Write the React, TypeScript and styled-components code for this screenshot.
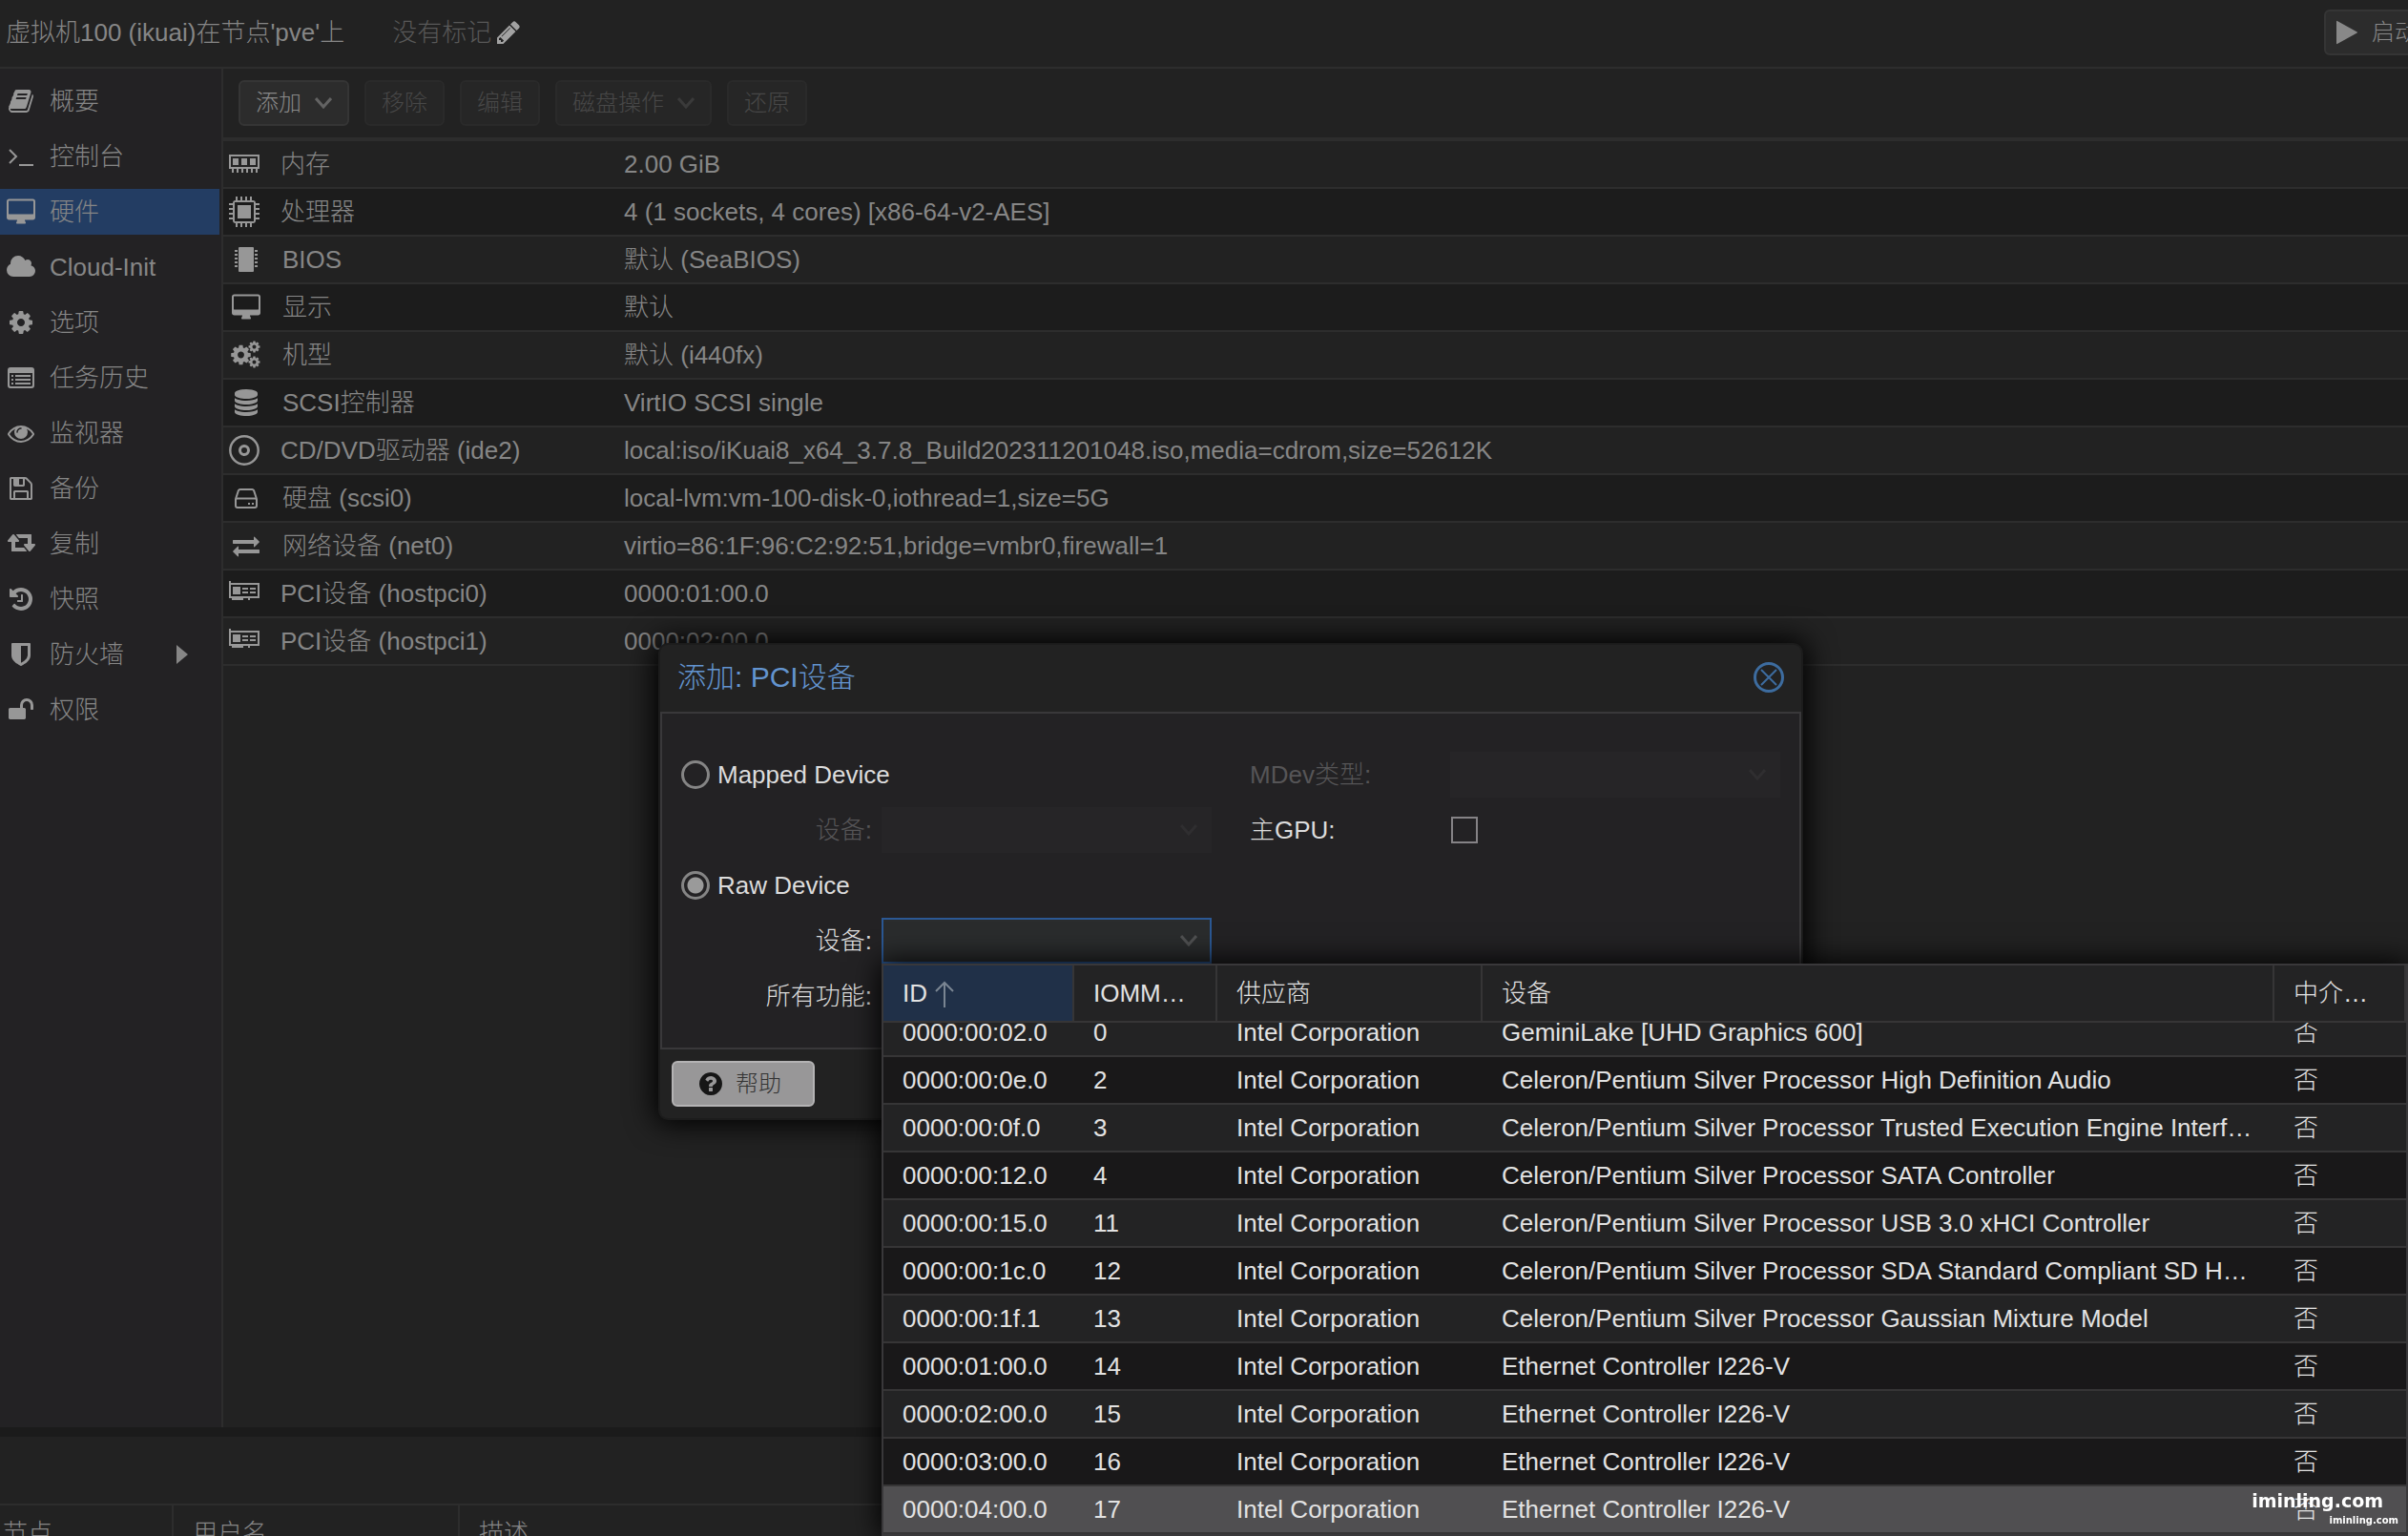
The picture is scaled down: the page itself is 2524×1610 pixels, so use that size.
import React, { useEffect, useRef } from "react";
import styled, { createGlobalStyle, css } from "styled-components";

const color = {
  bg: "#222222",
  sidebar: "#232224",
  altRow: "#1c1c1c",
  line: "#2d2d2d",
  text: "#868686",
  icon: "#979797",
  active: "#233d63",
  dialogLine: "#39383a",
  bright: "#dcdcdc",
};

const GlobalStyle = createGlobalStyle`
  *, *::before, *::after { box-sizing: border-box; }
  html, body { margin: 0; background: ${color.bg}; }
  body, button, input, select, table {
    font-family: "Liberation Sans", "Noto Sans CJK SC", sans-serif;
    font-size: 26px;
    font-weight: 300;
  }
  body { line-height: 48px; }
`;

/* ---------- icons ---------- */

const paths = {
  play: "M1576 927l-1328 738q-23 13-39.5 3t-16.5-36v-1472q0-26 16.5-36t39.5 3l1328 738q23 13 23 31t-23 31z",
  cog: "M1152 896q0-106-75-181t-181-75-181 75-75 181 75 181 181 75 181-75 75-181zm512-109v222q0 12-8 23t-20 13l-185 28q-19 54-39 91 35 50 107 138 10 12 10 25t-9 23q-27 37-99 108t-94 71q-12 0-26-9l-138-108q-44 23-91 38-16 136-29 186-7 28-36 28h-222q-14 0-24.5-8.5t-11.5-21.5l-28-184q-49-16-90-37l-141 107q-10 9-25 9-14 0-25-11-126-114-165-168-7-10-7-23 0-12 8-23 15-21 51-66.5t54-70.5q-27-50-41-99l-183-27q-13-2-21-12.5t-8-23.5v-222q0-12 8-23t19-13l186-28q14-46 39-92-40-57-107-138-10-12-10-24 0-10 9-23 26-36 98.5-107.5t94.5-71.5q13 0 26 10l138 107q44-23 91-38 16-136 29-186 7-28 36-28h222q14 0 24.5 8.500t11.500 21.500l28 184q49 16 90 37l142-107q9-9 24-9 13 0 25 10 129 119 165 170 7 8 7 22 0 12-8 23-15 21-51 66.5t-54 70.5q26 50 41 98l183 28q13 2 21 12.5t8 23.5z",
  cloud:
    "M1984 1152q0 159-112.5 271.5t-271.5 112.5h-1088q-185 0-316.5-131.5t-131.5-316.5q0-132 71-241.5t187-163.5q-2-28-2-43 0-212 150-362t362-150q158 0 286.5 88t187.5 230q70-62 166-62 106 0 181 75t75 181q0 75-41 138 129 30 213 134.5t84 239.5z",
  eye: "M1664 960q-152-236-381-353 61 104 61 225 0 185-131.5 316.5t-316.5 131.5-316.5-131.5-131.5-316.5q0-121 61-225-229 117-381 353 133 205 333.5 326.5t434.5 121.5 434.5-121.5 333.5-326.5zm-720-384q0-20-14-34t-34-14q-125 0-214.5 89.5t-89.5 214.5q0 20 14 34t34 14 34-14 14-34q0-86 61-147t147-61q20 0 34-14t14-34zm848 384q0 34-20 69-140 230-376.5 368.5t-499.5 138.5-499.5-139-376.5-368q-20-35-20-69t20-69q140-229 376.5-368t499.5-139 499.5 139 376.5 368q20 35 20 69z",
  floppy:
    "M512 1536h768v-384h-768v384zm896 0h128v-896q0-14-10-38.5t-20-34.5l-281-281q-10-10-34-20t-39-10v416q0 40-28 68t-68 28h-576q-40 0-68-28t-28-68v-416h-128v1280h128v-416q0-40 28-68t68-28h832q40 0 68 28t28 68v416zm-384-928v-320q0-13-9.5-22.5t-22.5-9.5h-192q-13 0-22.5 9.5t-9.5 22.5v320q0 13 9.5 22.5t22.5 9.5h192q13 0 22.5-9.5t9.5-22.5zm640 32v928q0 40-28 68t-68 28h-1344q-40 0-68-28t-28-68v-1344q0-40 28-68t68-28h928q40 0 88 20t76 48l280 280q28 28 48 76t20 88z",
  retweet:
    "M1344 1504q0 13-9.5 22.5t-22.5 9.5h-960q-8 0-13.5-2t-9-7-5.5-8-3-11.5-1-11.5v-600h-192q-26 0-45-19t-19-45q0-24 15-41l320-384q19-22 49-22t49 22l320 384q15 17 15 41 0 26-19 45t-45 19h-192v384h576q16 0 25 11l160 192q7 10 7 21zm576-416q0 24-15 41l-320 384q-20 23-49 23t-49-23l-320-384q-15-17-15-41 0-26 19-45t45-19h192v-384h-576q-16 0-25-12l-160-192q-7-9-7-20 0-13 9.5-22.5t22.5-9.5h960q8 0 13.5 2t9 7 5.5 8 3 11.5 1 11.5v600h192q26 0 45 19t19 45z",
  history:
    "M1664 896q0 156-61 298t-164 245-245 164-298 61q-172 0-327-72.5t-264-204.5q-7-10-6.5-22.5t8.5-20.5l137-138q10-9 25-9 16 2 23 12 73 95 179 147t225 52q104 0 198.5-40.5t163.5-109.5 109.5-163.5 40.5-198.5-40.5-198.5-109.5-163.5-163.5-109.5-198.5-40.5q-98 0-188 35.5t-160 101.5l137 138q31 30 14 69-17 40-59 40h-448q-26 0-45-19t-19-45v-448q0-42 40-59 39-17 69 14l130 129q107-101 244.5-156.5t284.5-55.5q156 0 298 61t245 164 164 245 61 298zm-640-288v448q0 14-9 23t-23 9h-320q-14 0-23-9t-9-23v-64q0-14 9-23t23-9h224v-352q0-14 9-23t23-9h64q14 0 23 9t9 23z",
  desktop:
    "M1728 992v-832q0-13-9.5-22.5t-22.5-9.5h-1600q-13 0-22.5 9.5t-9.5 22.5v832q0 13 9.5 22.5t22.5 9.5h1600q13 0 22.5-9.5t9.5-22.5zm128-832v1088q0 66-47 113t-113 47h-544q0 37 16 77.5t32 71 16 43.5q0 26-19 45t-45 19h-512q-26 0-45-19t-19-45q0-14 16-44t32-70 16-78h-544q-66 0-113-47t-47-113v-1088q0-66 47-113t113-47h1600q66 0 113 47t47 113z",
  database:
    "M896 768q237 0 443-43t325-127v170q0 69-103 128t-280 93.5-385 34.5-385-34.5-280-93.5-103-128v-170q119 84 325 127t443 43zm0 768q237 0 443-43t325-127v170q0 69-103 128t-280 93.5-385 34.5-385-34.5-280-93.5-103-128v-170q119 84 325 127t443 43zm0-384q237 0 443-43t325-127v170q0 69-103 128t-280 93.5-385 34.5-385-34.5-280-93.5-103-128v-170q119 84 325 127t443 43zm0-1152q208 0 385 34.5t280 93.5 103 128v128q0 69-103 128t-280 93.5-385 34.5-385-34.5-280-93.5-103-128v-128q0-69 103-128t280-93.5 385-34.5z",
  exchange:
    "M1792 1184v192q0 13-9.5 22.5t-22.5 9.5h-1376v192q0 13-9.5 22.5t-22.5 9.5q-12 0-24-10l-319-320q-9-9-9-22 0-14 9-23l320-320q9-9 23-9 13 0 22.5 9.5t9.5 22.5v192h1376q13 0 22.5 9.5t9.5 22.5zm0-544q0 14-9 23l-320 320q-9 9-23 9-13 0-22.5-9.5t-9.5-22.5v-192h-1376q-13 0-22.5-9.5t-9.5-22.5v-192q0-13 9.5-22.5t22.5-9.5h1376v-192q0-14 9-23t23-9q12 0 24 10l319 319q9 9 9 23z",
  shield:
    "M1344 960v-640h-448v1137q119-63 213-137 235-184 235-360zm192-768v768q0 86-33.5 170.5t-83 150-118 127.5-126.5 103-121 77.5-89.5 49.5-42.5 20q-12 6-26 6t-26-6q-16-7-42.5-20t-89.5-49.5-121-77.5-126.5-103-118-127.5-83-150-33.5-170.5v-768q0-26 19-45t45-19h1152q26 0 45 19t19 45z",
  unlock:
    "M1728 576v256q0 26-19 45t-45 19h-64q-26 0-45-19t-19-45v-256q0-106-75-181t-181-75-181 75-75 181v192h96q40 0 68 28t28 68v576q0 40-28 68t-68 28h-960q-40 0-68-28t-28-68v-576q0-40 28-68t68-28h672v-192q0-185 131.5-316.5t316.5-131.5 316.5 131.5 131.5 316.5z",
  pencil:
    "M491 1536l91-91-235-235-91 91v107h128v128h107zm523-928q0-22-22-22-10 0-17 7l-542 542q-7 7-7 17 0 22 22 22 10 0 17-7l542-542q7-7 7-17zm-54-192l416 416-832 832h-416v-416zm683 96q0 53-37 90l-166 166-416-416 166-165q36-38 90-38 53 0 91 38l235 234q37 39 37 91z",
  question:
    "M1024 1376v-192q0-14-9-23t-23-9h-192q-14 0-23 9t-9 23v192q0 14 9 23t23 9h192q14 0 23-9t9-23zm256-672q0-88-55.5-163t-138.5-116-170-41q-243 0-371 213-15 24 8 42l132 100q7 6 19 6 16 0 25-12 53-68 86-92 34-24 86-24 48 0 85.5 26t37.5 59q0 38-20 61t-68 45q-63 28-115.5 86.5t-52.5 125.5v36q0 14 9 23t23 9h192q14 0 23-9t9-23q0-19 21.5-49.5t54.5-49.5q32-18 49-28.5t46-35 44.5-48 28-60.5 12.5-81zm384 192q0 209-103 385.5t-279.5 279.5-385.5 103-385.5-103-279.5-279.5-103-385.5 103-385.5 279.5-279.5 385.5-103 385.5 103 279.5 279.5 103 385.5z",
  book: "M1703 478q40 57 18 129l-275 906q-19 64-76.5 107.5t-122.5 43.5h-923q-77 0-148.5-53.5t-99.5-131.5q-24-67-2-127 0-4 3-27t4-37q1-8-3-21.5t-3-19.5q2-11 8-21t16.5-23.5 16.5-23.5q23-38 45-91.5t30-91.5q3-10 .5-30t-.5-28q3-11 17-28t17-23q21-36 42-92t25-90q1-9-2.5-32t.5-28q4-13 22-30.5t22-22.5q19-26 42.5-84.5t27.5-96.5q1-8-3-25.5t-2-26.5q2-8 9-18t18-23 17-21q8-12 16.5-30.5t15-35 16-36 19.5-32 26.5-23.5 36-11.5 47.5 5.500l-1 3q38-9 51-9h761q74 0 114 56t18 130l-274 906q-36 119-71.5 153.5t-128.5 34.5h-869q-27 0-38 15-11 16-1 43 24 70 144 70h923q29 0 56-15.5t35-41.5l300-987q7-22 5-57 38 15 59 43zm-1064 2q-4 13 2 22.5t20 9.5h608q13 0 25.5-9.5t16.5-22.5l21-64q4-13-2-22.5t-20-9.5h-608q-13 0-25.5 9.5t-16.5 22.5zm-83 256q-4 13 2 22.5t20 9.5h608q13 0 25.5-9.5t16.5-22.5l21-64q4-13-2-22.5t-20-9.5h-608q-13 0-25.5 9.5t-16.5 22.5z",
};

type GlyphName = keyof typeof paths;

const Glyph = ({ name, size = 28, box = "0 0 1792 1792" }: { name: GlyphName; size?: number; box?: string }) => {
  const [, , w, h] = box.split(" ").map(Number);
  return (
    <svg width={Math.round((size * w) / h)} height={size} viewBox={box} fill="currentColor" aria-hidden="true">
      <path d={paths[name]} />
    </svg>
  );
};

const Desktop = () => <Glyph name="desktop" box="-64 -32 1920 1792" />;
const Cloud = () => <Glyph name="cloud" box="64 0 1920 1792" />;
const Retweet = () => <Glyph name="retweet" box="0 128 1920 1792" />;

const Terminal = () => (
  <svg width="28" height="28" viewBox="0 0 28 28" fill="none" stroke="currentColor" strokeWidth="2" aria-hidden="true">
    <path d="M2 7l7 7-7 7" />
    <path d="M12 23h15" />
  </svg>
);

const ListAlt = () => (
  <svg width="28" height="24" viewBox="0 0 28 24" fill="currentColor" aria-hidden="true">
    <path
      fillRule="evenodd"
      d="M3 1h22a3 3 0 0 1 3 3v16a3 3 0 0 1-3 3H3a3 3 0 0 1-3-3V4a3 3 0 0 1 3-3zM2 7v12.500a1.500 1.500 0 0 0 1.500 1.500h21a1.500 1.500 0 0 0 1.500-1.500V7z"
    />
    <path d="M4 9h2v2H4zM4 13h2v2H4zM4 17h2v2H4zM8 9h16v2H8zM8 13h16v2H8zM8 17h16v2H8z" />
  </svg>
);

const Cogs = () => (
  <svg width="32" height="30" viewBox="0 0 32 30" fill="currentColor" aria-hidden="true">
    <g transform="translate(-1.500 3) scale(.0134)">
      <path d={paths.cog} />
    </g>
    <g transform="translate(17.500 -.5) scale(.0078)">
      <path d={paths.cog} />
    </g>
    <g transform="translate(17.500 15.500) scale(.0078)">
      <path d={paths.cog} />
    </g>
  </svg>
);

const Hdd = () => (
  <svg width="24" height="24" viewBox="0 0 24 24" fill="none" stroke="currentColor" strokeWidth="2" aria-hidden="true">
    <path d="M1 13v7a2 2 0 0 0 2 2h18a2 2 0 0 0 2-2v-7M1 13L4 4a2 2 0 0 1 2-1h12a2 2 0 0 1 2 1l3 9" />
    <path d="M1 13.500a2 2 0 0 1 2-1h18a2 2 0 0 1 2 1" />
    <path d="M14 18h2M18 18h2" />
  </svg>
);

const Memory = () => (
  <svg width="32" height="20" viewBox="0 0 32 20" fill="currentColor" aria-hidden="true">
    <path fillRule="evenodd" d="M0 0h32v15H0zM2 2v11h28V2z" />
    <path d="M4 4h6v7H4zM13 4h6v7h-6zM22 4h6v7h-6zM3 15h2v4H3zM8 15h2v4H8zM13 15h2v4h-2zM18 15h2v4h-2zM23 15h2v4h-2zM28 15h2v4h-2z" />
  </svg>
);

const Cpu = () => (
  <svg width="32" height="32" viewBox="0 0 32 32" fill="currentColor" aria-hidden="true">
    <path fillRule="evenodd" d="M7 4h18a3 3 0 0 1 3 3v18a3 3 0 0 1-3 3H7a3 3 0 0 1-3-3V7a3 3 0 0 1 3-3zM6 6v20h20V6z" />
    <path d="M9 9h14v14H9z" />
    <path d="M7 0h2v4H7zM12 0h2v4h-2zM17 0h2v4h-2zM22 0h2v4h-2zM7 28h2v4H7zM12 28h2v4h-2zM17 28h2v4h-2zM22 28h2v4h-2z" />
    <path d="M0 7h4v2H0zM0 12h4v2H0zM0 17h4v2H0zM0 22h4v2H0zM28 7h4v2h-4zM28 12h4v2h-4zM28 17h4v2h-4zM28 22h4v2h-4z" />
  </svg>
);

const Bios = () => (
  <svg width="24" height="28" viewBox="0 0 24 28" fill="currentColor" aria-hidden="true">
    <rect x="4" y="1" width="16" height="26" rx="1" />
    <path d="M0 4h3v2H0zM0 8h3v2H0zM0 12h3v2H0zM0 16h3v2H0zM0 20h3v2H0zM21 4h3v2h-3zM21 8h3v2h-3zM21 12h3v2h-3zM21 16h3v2h-3zM21 20h3v2h-3z" />
  </svg>
);

const Disc = () => (
  <svg width="32" height="32" viewBox="0 0 32 32" fill="none" stroke="currentColor" aria-hidden="true">
    <circle cx="16" cy="16" r="14.700" strokeWidth="2.400" />
    <circle cx="16" cy="16" r="4.500" strokeWidth="3" />
  </svg>
);

const PciCard = () => (
  <svg width="32" height="26" viewBox="0 0 32 26" fill="currentColor" aria-hidden="true">
    <path fillRule="evenodd" d="M0 0h2v2h30v16H0zM2 4v12h28V4z" />
    <path d="M4 6h8v8H4zM14 7h6v2h-6zM22 7h6v2h-6zM14 11h6v2h-6zM22 11h6v2h-6zM3 18h12v2H3zM20 18h2v2h-2z" />
  </svg>
);

const Chevron = () => (
  <svg width="18" height="12" viewBox="0 0 18 12" fill="none" stroke="currentColor" strokeWidth="3" aria-hidden="true">
    <path d="M1 1l8 9 8-9" />
  </svg>
);

const Caret = () => (
  <svg width="12" height="20" viewBox="0 0 12 20" fill="currentColor" aria-hidden="true">
    <path d="M0 0l12 10L0 20z" />
  </svg>
);

const SortUp = () => (
  <svg width="20" height="28" viewBox="0 0 20 28" fill="none" stroke="#7a8592" strokeWidth="2" aria-hidden="true">
    <path d="M10 28V2M1 11l9-9 9 9" />
  </svg>
);

const CloseMark = () => (
  <svg width="32" height="32" viewBox="0 0 32 32" fill="none" stroke="#3d6c9f" strokeWidth="2" aria-hidden="true">
    <circle cx="16" cy="16" r="14.500" strokeWidth="3" />
    <path d="M8 8l16 16M24 8L8 24" />
  </svg>
);

/* ---------- page frame ---------- */

const Page = styled.div`
  position: relative;
  display: grid;
  grid-template-rows: 72px minmax(0, 1fr) 10px 104px;
  height: 100vh;
  overflow: hidden;
  background: ${color.bg};
  color: ${color.text};
`;

const Header = styled.header`
  display: flex;
  align-items: flex-start;
  padding: 10px 0 0 6px;
  border-bottom: 2px solid ${color.line};
  overflow: hidden;
`;

const Title = styled.h1`
  margin: 0 50px 0 0;
  font-size: 26px;
  font-weight: 300;
  white-space: nowrap;
`;

const Tags = styled.div`
  flex: 1;
  display: flex;
  align-items: center;
  gap: 4px;
  color: #585858;
`;

const TagEdit = styled.button`
  display: flex;
  padding: 0;
  border: 0;
  background: none;
  color: #a2a2a2;
`;

const HeaderActions = styled.div`
  flex: 0 0 88px;
  min-width: 0;
  display: flex;
`;

const ToolButton = styled.button<{ $gap?: number; $pad?: number }>`
  flex: none;
  display: flex;
  align-items: center;
  gap: ${(p) => p.$gap ?? 14}px;
  height: 48px;
  padding: 0 ${(p) => p.$pad ?? 16}px;
  border: 2px solid #353535;
  border-radius: 6px;
  background: #2c2c2c;
  color: #888888;
  font-size: 24px;
  line-height: 44px;
  white-space: nowrap;

  &:disabled {
    border-color: #2a2a2a;
    background: #262626;
    color: #484848;
  }

  svg {
    opacity: 0.6;
  }
`;

const StartButton = styled(ToolButton)`
  svg {
    opacity: 1;
  }
`;

const Middle = styled.div`
  display: grid;
  grid-template-columns: 234px minmax(0, 1fr);
`;

const Sidebar = styled.nav`
  display: flex;
  flex-direction: column;
  gap: 10px;
  padding: 10px 2px 0 0;
  border-right: 2px solid ${color.line};
  background: ${color.sidebar};
`;

const NavItem = styled.a<{ $active?: boolean }>`
  display: flex;
  align-items: center;
  height: 48px;
  padding: 0 33px 0 4px;
  gap: 12px;
  color: ${color.text};
  text-decoration: none;
  white-space: nowrap;
  ${(p) =>
    p.$active &&
    css`
      background: ${color.active};
    `}
`;

const NavLabel = styled.span`
  flex: 1;
`;

const IconBox = styled.span<{ $width?: number; $start?: boolean }>`
  flex: none;
  display: flex;
  justify-content: ${(p) => (p.$start ? "flex-start" : "center")};
  width: ${(p) => p.$width ?? 36}px;
  color: ${color.icon};
`;

const Toolbar = styled.div`
  display: flex;
  align-items: center;
  gap: 16px;
  height: 76px;
  padding: 0 16px;
  border-bottom: 4px solid ${color.line};
`;

const HardwareTable = styled.table`
  width: 100%;
  border-collapse: separate;
  border-spacing: 0;
  table-layout: fixed;

  tr:nth-child(even) {
    background: ${color.altRow};
  }
  th,
  td {
    height: 50px;
    padding: 0;
    border-bottom: 2px solid ${color.line};
    font-weight: 300;
    line-height: 48px;
    text-align: left;
    white-space: nowrap;
  }
  th {
    width: 420px;
  }
`;

const NameCell = styled.div`
  display: flex;
  align-items: center;
  gap: 20px;
  height: 48px;
  padding-left: 6px;
`;

const Splitter = styled.div`
  background: #1b1b1b;
`;

const LogPanel = styled.section`
  padding-top: 70px;
`;

const LogTable = styled.table`
  width: 100%;
  border-collapse: separate;
  border-spacing: 0;
  table-layout: fixed;

  th {
    height: 60px;
    padding: 0 0 0 20px;
    border-top: 2px solid ${color.line};
    border-right: 2px solid ${color.line};
    font-weight: 300;
    line-height: 56px;
    text-align: left;
  }
  th:first-child {
    width: 182px;
    padding-left: 3px;
  }
  th:nth-child(2) {
    width: 300px;
  }
`;

/* ---------- dialog ---------- */

const Dialog = styled.section`
  position: absolute;
  top: 674px;
  left: 690px;
  width: 1200px;
  border: 2px solid #1c1c1c;
  border-radius: 10px;
  background: ${color.bg};
  box-shadow: 0 0 30px 4px #000;
  color: ${color.bright};
`;

const DialogHead = styled.div`
  display: flex;
  align-items: center;
  justify-content: space-between;
  height: 70px;
  padding: 0 18px 2px;

  h2 {
    margin: 0;
    color: #6394cf;
    font-size: 30px;
    font-weight: 300;
  }
`;

const CloseButton = styled.button`
  display: flex;
  padding: 0;
  border: 0;
  background: none;
`;

const DialogBody = styled.div`
  display: grid;
  grid-template-columns: 1fr 1fr;
  gap: 40px;
  height: 354px;
  padding: 40px 20px 0;
  border: 2px solid ${color.dialogLine};
  background: ${color.sidebar};
`;

const FormColumn = styled.div`
  display: flex;
  flex-direction: column;
  gap: 10px;
`;

const RadioRow = styled.label`
  display: flex;
  align-items: center;
  gap: 8px;
  height: 48px;
`;

const Radio = styled.input`
  appearance: none;
  width: 30px;
  height: 30px;
  margin: 0;
  border: 3px solid #858585;
  border-radius: 50%;

  &:checked {
    background: radial-gradient(circle, #9a9a9a 8px, transparent 9px);
  }
`;

const Field = styled.div<{ $right?: boolean; $off?: boolean }>`
  display: grid;
  grid-template-columns: ${(p) => (p.$right ? "minmax(0, 1fr) 346px" : "210px minmax(0, 1fr)")};
  align-items: center;
  height: 48px;
  color: ${(p) => (p.$off ? "#565557" : color.bright)};

  label {
    padding-right: ${(p) => (p.$right ? 0 : 10)}px;
    text-align: ${(p) => (p.$right ? "left" : "right")};
  }
`;

const SelectWrap = styled.div`
  display: grid;
  align-items: center;

  > * {
    grid-area: 1 / 1;
  }
  svg {
    justify-self: end;
    margin-right: 15px;
    color: #505152;
    pointer-events: none;
  }
  select:disabled + svg {
    color: #2f2e30;
  }
`;

const boxStyle = css`
  width: 100%;
  height: 48px;
  padding: 0 50px 0 12px;
  border-radius: 0;
  color: ${color.bright};
  outline: none;
`;

const PlainSelect = styled.select`
  ${boxStyle}
  appearance: none;
  border: 0;
  background: #262527;
  opacity: 1;
`;

const ComboInput = styled.input`
  ${boxStyle}
  border: 2px solid #2b5894;
  background: #2a2c2d;
`;

const CheckBox = styled.input`
  appearance: none;
  width: 28px;
  height: 28px;
  margin: 0 0 0 1px;
  border: 2px solid #858386;
`;

const DialogFoot = styled.div`
  display: flex;
  height: 72px;
  padding: 12px;
`;

const HelpButton = styled.button`
  display: flex;
  align-items: center;
  justify-content: center;
  gap: 12px;
  width: 150px;
  height: 48px;
  padding: 0 8px 0 0;
  border: 2px solid #b4b3b4;
  border-radius: 6px;
  background: #989798;
  color: #333;
  font-size: 24px;
  line-height: 44px;

  svg {
    color: #161616;
  }
`;

/* ---------- device picker ---------- */

const Picker = styled.div`
  position: absolute;
  top: 1010px;
  right: 0;
  bottom: 0;
  left: 924px;
  border: 2px solid ${color.dialogLine};
  background: ${color.bg};
  box-shadow: 0 0 28px 2px #000;
  color: #e2e2e2;
  overflow: hidden;
`;

const PickerTable = styled.table`
  width: 100%;
  border-collapse: separate;
  border-spacing: 0;
  table-layout: fixed;

  th,
  td {
    padding: 0 20px;
    border-bottom: 2px solid #363536;
    font-weight: 300;
    text-align: left;
    white-space: nowrap;
    overflow: hidden;
    text-overflow: ellipsis;
  }
  th {
    position: sticky;
    top: 0;
    height: 60px;
    border-right: 2px solid #363536;
    background: #232324;
    line-height: 58px;
  }
  th[aria-sort] {
    background: #203048;
  }
  th svg {
    margin-left: 8px;
    vertical-align: -6px;
  }
  td {
    height: 50px;
    background: #232324;
    line-height: 48px;
  }
`;

const DeviceRow = styled.tr<{ $alt: boolean; $selected: boolean }>`
  && td {
    background: ${(p) => (p.$selected ? "#504f51" : p.$alt ? "#191819" : "#232324")};
  }
`;

const Column = styled.col<{ $width?: number }>`
  width: ${(p) => (p.$width ? `${p.$width}px` : "auto")};
`;

const Watermark = styled.div`
  position: absolute;
  right: 10px;
  bottom: 8px;
  display: flex;
  flex-direction: column;
  align-items: flex-end;
  color: #fff;
  font-family: "DejaVu Sans", sans-serif;
  font-weight: 700;

  strong {
    padding-right: 16px;
    font-size: 19px;
    line-height: 26px;
  }
  small {
    font-size: 10px;
    line-height: 16px;
  }
`;

/* ---------- data ---------- */

const navItems = [
  { label: "概要", icon: <Glyph name="book" /> },
  { label: "控制台", icon: <Terminal /> },
  { label: "硬件", icon: <Desktop />, active: true },
  { label: "Cloud-Init", icon: <Cloud /> },
  { label: "选项", icon: <Glyph name="cog" /> },
  { label: "任务历史", icon: <ListAlt /> },
  { label: "监视器", icon: <Glyph name="eye" /> },
  { label: "备份", icon: <Glyph name="floppy" /> },
  { label: "复制", icon: <Retweet /> },
  { label: "快照", icon: <Glyph name="history" /> },
  { label: "防火墙", icon: <Glyph name="shield" />, more: true },
  { label: "权限", icon: <Glyph name="unlock" /> },
];

const hardware = [
  { name: "内存", value: "2.00 GiB", icon: <Memory />, wide: true },
  { name: "处理器", value: "4 (1 sockets, 4 cores) [x86-64-v2-AES]", icon: <Cpu />, wide: true },
  { name: "BIOS", value: "默认 (SeaBIOS)", icon: <Bios /> },
  { name: "显示", value: "默认", icon: <Desktop /> },
  { name: "机型", value: "默认 (i440fx)", icon: <Cogs /> },
  { name: "SCSI控制器", value: "VirtIO SCSI single", icon: <Glyph name="database" /> },
  {
    name: "CD/DVD驱动器 (ide2)",
    value: "local:iso/iKuai8_x64_3.7.8_Build202311201048.iso,media=cdrom,size=52612K",
    icon: <Disc />,
    wide: true,
  },
  { name: "硬盘 (scsi0)", value: "local-lvm:vm-100-disk-0,iothread=1,size=5G", icon: <Hdd /> },
  {
    name: "网络设备 (net0)",
    value: "virtio=86:1F:96:C2:92:51,bridge=vmbr0,firewall=1",
    icon: <Glyph name="exchange" />,
  },
  { name: "PCI设备 (hostpci0)", value: "0000:01:00.0", icon: <PciCard />, wide: true },
  { name: "PCI设备 (hostpci1)", value: "0000:02:00.0", icon: <PciCard />, wide: true },
];

const devices = [
  ["0000:00:02.0", "0", "GeminiLake [UHD Graphics 600]"],
  ["0000:00:0e.0", "2", "Celeron/Pentium Silver Processor High Definition Audio"],
  ["0000:00:0f.0", "3", "Celeron/Pentium Silver Processor Trusted Execution Engine Interface"],
  ["0000:00:12.0", "4", "Celeron/Pentium Silver Processor SATA Controller"],
  ["0000:00:15.0", "11", "Celeron/Pentium Silver Processor USB 3.0 xHCI Controller"],
  ["0000:00:1c.0", "12", "Celeron/Pentium Silver Processor SDA Standard Compliant SD Host Controller"],
  ["0000:00:1f.1", "13", "Celeron/Pentium Silver Processor Gaussian Mixture Model"],
  ["0000:01:00.0", "14", "Ethernet Controller I226-V"],
  ["0000:02:00.0", "15", "Ethernet Controller I226-V"],
  ["0000:03:00.0", "16", "Ethernet Controller I226-V"],
  ["0000:04:00.0", "17", "Ethernet Controller I226-V"],
];

/* ---------- sections ---------- */

function HardwarePanel() {
  return (
    <main>
      <Toolbar>
        <ToolButton>
          添加 <Chevron />
        </ToolButton>
        <ToolButton disabled>移除</ToolButton>
        <ToolButton disabled>编辑</ToolButton>
        <ToolButton disabled>
          磁盘操作 <Chevron />
        </ToolButton>
        <ToolButton disabled>还原</ToolButton>
      </Toolbar>
      <HardwareTable>
        <tbody>
          {hardware.map((row) => (
            <tr key={row.name}>
              <th scope="row">
                <NameCell>
                  <IconBox $width={row.wide ? 34 : 36} $start={row.wide}>
                    {row.icon}
                  </IconBox>
                  {row.name}
                </NameCell>
              </th>
              <td>{row.value}</td>
            </tr>
          ))}
        </tbody>
      </HardwareTable>
    </main>
  );
}

function PciDialog() {
  return (
    <Dialog role="dialog" aria-labelledby="dialog-title">
      <DialogHead>
        <h2 id="dialog-title">添加: PCI设备</h2>
        <CloseButton aria-label="关闭">
          <CloseMark />
        </CloseButton>
      </DialogHead>
      <DialogBody>
        <FormColumn>
          <RadioRow>
            <Radio type="radio" name="kind" value="mapped" />
            Mapped Device
          </RadioRow>
          <Field $off>
            <label htmlFor="mapped-device">设备:</label>
            <SelectWrap>
              <PlainSelect id="mapped-device" disabled />
              <Chevron />
            </SelectWrap>
          </Field>
          <RadioRow>
            <Radio type="radio" name="kind" value="raw" defaultChecked />
            Raw Device
          </RadioRow>
          <Field>
            <label htmlFor="raw-device">设备:</label>
            <SelectWrap>
              <ComboInput id="raw-device" role="combobox" aria-expanded="true" aria-controls="device-list" />
              <Chevron />
            </SelectWrap>
          </Field>
          <Field>
            <label htmlFor="all-functions">所有功能:</label>
            <CheckBox id="all-functions" type="checkbox" />
          </Field>
        </FormColumn>
        <FormColumn>
          <Field $right $off>
            <label htmlFor="mdev-type">MDev类型:</label>
            <SelectWrap>
              <PlainSelect id="mdev-type" disabled />
              <Chevron />
            </SelectWrap>
          </Field>
          <Field $right>
            <label htmlFor="primary-gpu">主GPU:</label>
            <CheckBox id="primary-gpu" type="checkbox" />
          </Field>
        </FormColumn>
      </DialogBody>
      <DialogFoot>
        <HelpButton>
          <Glyph name="question" />
          帮助
        </HelpButton>
      </DialogFoot>
    </Dialog>
  );
}

function DevicePicker() {
  const list = useRef<HTMLDivElement>(null);

  // Keep the selected device, the last of the list, in view.
  useEffect(() => {
    if (list.current) list.current.scrollTop = list.current.scrollHeight;
  }, []);

  return (
    <Picker ref={list} id="device-list">
      <PickerTable>
        <colgroup>
          <Column $width={200} />
          <Column $width={150} />
          <Column $width={278} />
          <Column />
          <Column $width={138} />
        </colgroup>
        <thead>
          <tr>
            <th aria-sort="ascending">
              ID
              <SortUp />
            </th>
            <th>IOMMU组</th>
            <th>供应商</th>
            <th>设备</th>
            <th>中介设备</th>
          </tr>
        </thead>
        <tbody>
          {devices.map(([id, group, name], i) => (
            <DeviceRow key={id} $alt={i % 2 === 1} $selected={i === devices.length - 1}>
              <td>{id}</td>
              <td>{group}</td>
              <td>Intel Corporation</td>
              <td>{name}</td>
              <td>否</td>
            </DeviceRow>
          ))}
        </tbody>
      </PickerTable>
    </Picker>
  );
}

export default function App() {
  return (
    <>
      <GlobalStyle />
      <Page>
        <Header>
          <Title>虚拟机100 (ikuai)在节点'pve'上</Title>
          <Tags>
            没有标记
            <TagEdit aria-label="编辑标记">
              <Glyph name="pencil" />
            </TagEdit>
          </Tags>
          <HeaderActions>
            <StartButton $gap={12} $pad={8}>
              <Glyph name="play" />
              启动
            </StartButton>
          </HeaderActions>
        </Header>
        <Middle>
          <Sidebar>
            {navItems.map((item) => (
              <NavItem key={item.label} href="#" $active={item.active}>
                <IconBox>{item.icon}</IconBox>
                <NavLabel>{item.label}</NavLabel>
                {item.more && <Caret />}
              </NavItem>
            ))}
          </Sidebar>
          <HardwarePanel />
        </Middle>
        <Splitter />
        <LogPanel>
          <LogTable>
            <thead>
              <tr>
                <th>节点</th>
                <th>用户名</th>
                <th>描述</th>
              </tr>
            </thead>
          </LogTable>
        </LogPanel>
        <PciDialog />
        <DevicePicker />
        <Watermark>
          <strong>iminling.com</strong>
          <small>iminling.com</small>
        </Watermark>
      </Page>
    </>
  );
}
